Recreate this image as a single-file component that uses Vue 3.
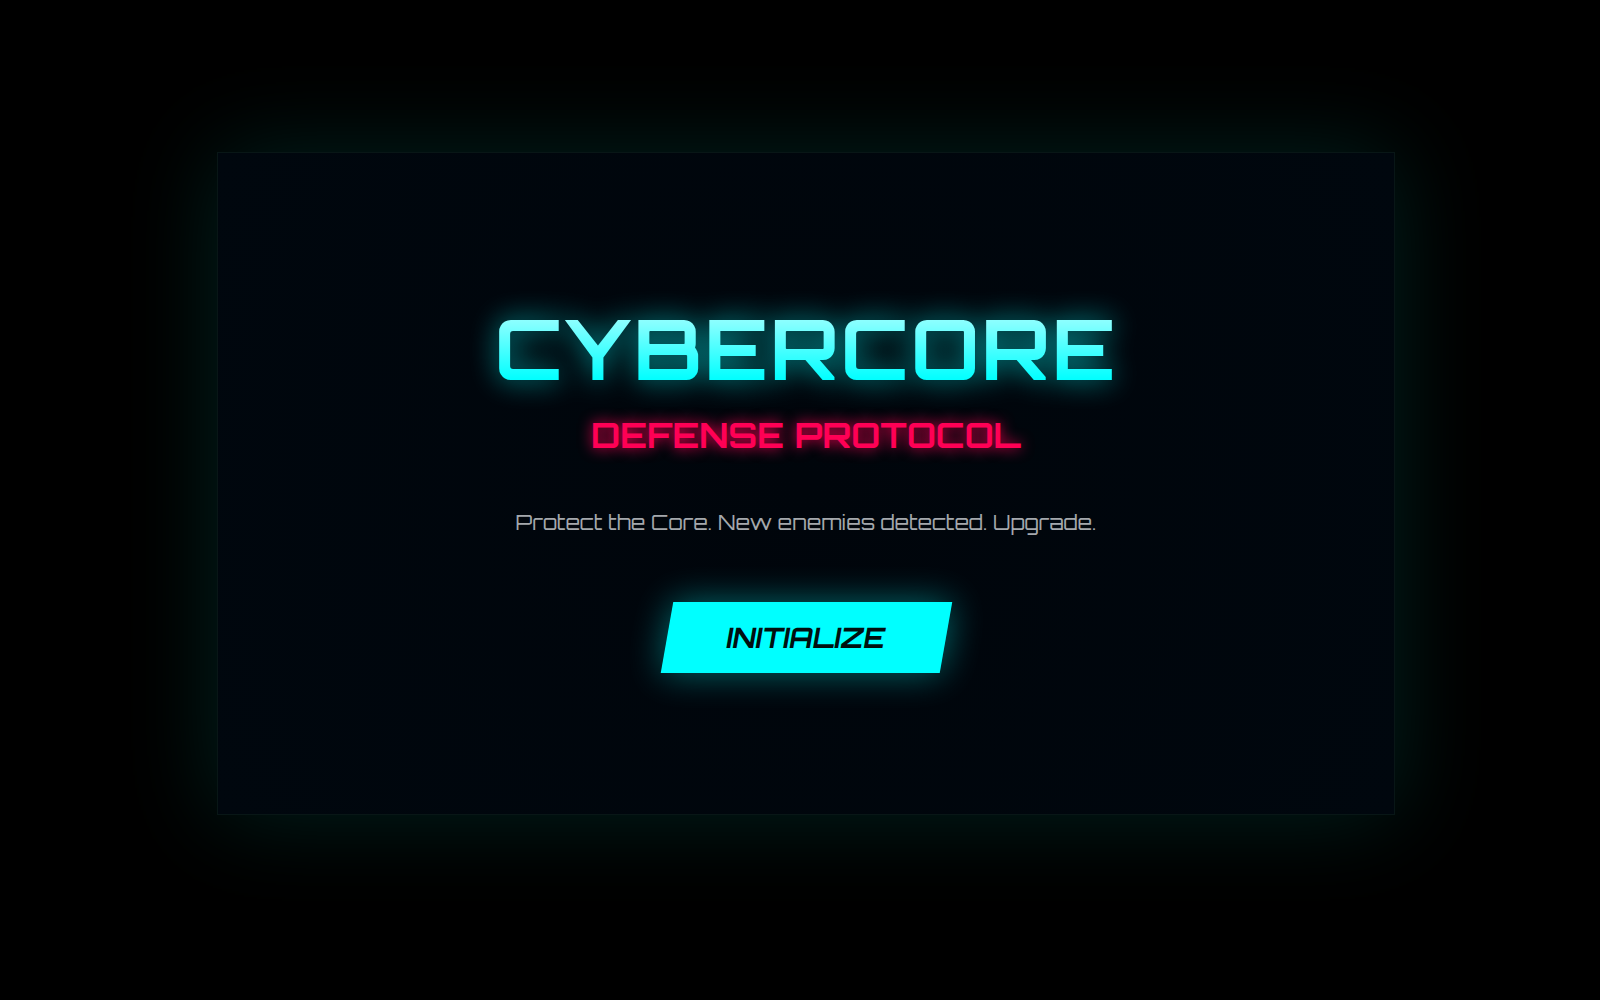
<template>
  <main class="stage">
    <section class="panel">
      <h1 class="title">CYBERCORE</h1>
      <h2 class="subtitle">DEFENSE PROTOCOL</h2>
      <p class="briefing">Protect the Core. New enemies detected. Upgrade.</p>
      <button class="start-btn" type="button" @click="started = true">INITIALIZE</button>
    </section>
  </main>
</template>

<script setup>
import { ref } from 'vue'

const started = ref(false)
</script>

<style>
body {
  margin: 0;
  background: #000;
}
</style>

<style scoped>
.stage {
  box-sizing: border-box;
  min-height: 100vh;
  padding: 152px 205px 184px 217px;
  background: #000;
  font-family: Orbitron, 'DejaVu Sans', sans-serif;
  overflow: hidden;
}

.panel {
  box-sizing: border-box;
  aspect-ratio: 16 / 9;
  padding-top: 8px;
  display: flex;
  flex-direction: column;
  align-items: center;
  justify-content: center;
  text-align: center;
  border: 1px solid #081616;
  background: radial-gradient(circle, #00050b 0%, #00070e 100%);
  box-shadow: 0 0 88px rgba(0, 255, 235, 0.13);
}

.title {
  margin: 0 0 21px;
  font-size: 83px;
  line-height: 92px;
  font-weight: 700;
  letter-spacing: 2px;
  color: transparent;
  background: linear-gradient(180deg, #b8ffff 0%, #0ff 85%);
  -webkit-background-clip: text;
  background-clip: text;
  filter: drop-shadow(0 0 14px rgba(0, 255, 255, 0.6));
}

.subtitle {
  margin: 0 0 53px;
  font-size: 35px;
  line-height: 40px;
  font-weight: 700;
  color: #ff0055;
  text-shadow: 0 0 14px #ff0055;
}

.briefing {
  margin: 0 0 66px;
  font-size: 21px;
  line-height: 28px;
  color: #a4a8ac;
}

.start-btn {
  padding: 20px 60px;
  border: none;
  background: #0ff;
  color: #000f10;
  font-family: inherit;
  font-size: 28px;
  line-height: 31px;
  font-weight: 700;
  cursor: pointer;
  transform: skewX(-10deg);
  box-shadow: 0 0 36px rgba(0, 255, 255, 0.4);
}

.start-btn:hover {
  background: #fff;
}
</style>
